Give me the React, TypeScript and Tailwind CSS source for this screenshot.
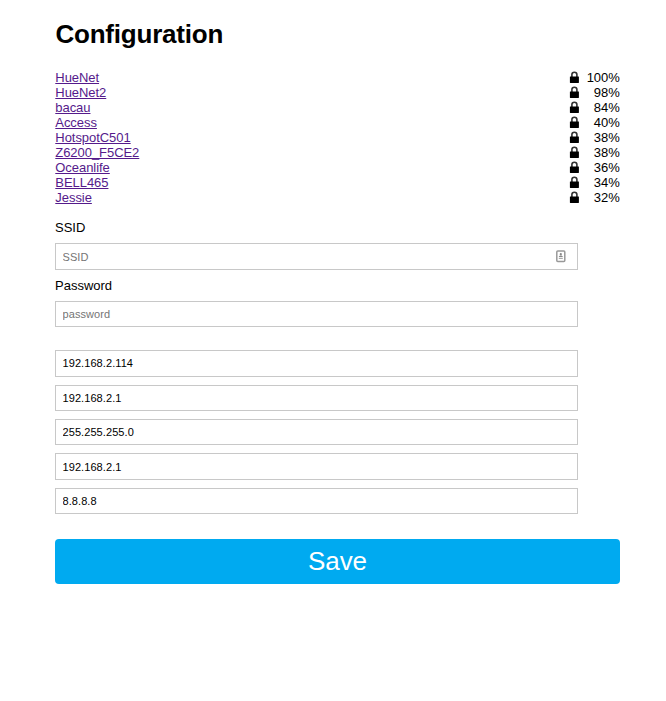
import React from "react";

const networks: [string, number][] = [
  ["HueNet", 100],
  ["HueNet2", 98],
  ["bacau", 84],
  ["Access", 40],
  ["HotspotC501", 38],
  ["Z6200_F5CE2", 38],
  ["Oceanlife", 36],
  ["BELL465", 34],
  ["Jessie", 32],
];

const addresses = [
  { value: "192.168.2.114", size: "h-[27px] mb-2 pb-px" },
  { value: "192.168.2.1", size: "h-[26px] mb-2" },
  { value: "255.255.255.0", size: "h-[26px] mb-2" },
  { value: "192.168.2.1", size: "h-[27px] mb-2" },
  { value: "8.8.8.8", size: "h-[26px]" },
];

const field =
  "block w-full border border-[#c8c8c8] bg-white px-[6.5px] text-[11px] leading-[13px] tracking-[0.08px] text-black outline-none placeholder:text-[#757575]";

function Lock() {
  return (
    <svg width="10" height="13" viewBox="0 0 10 13" className="block">
      <path d="M2.9 6V3.6a2.5 2.3 0 0 1 5 0V6" fill="none" stroke="#333" strokeWidth="1.6" />
      <rect x="0.9" y="5.4" width="9" height="6.5" rx="0.4" fill="#000" />
    </svg>
  );
}

function ContactIcon() {
  return (
    <svg width="11" height="13" viewBox="0 0 11 13" className="absolute right-[12px] top-[7px]">
      <rect x="1.8" y="1" width="8" height="10.6" rx="1" fill="#fff" stroke="#999" strokeWidth="1.5" />
      <circle cx="5.8" cy="4.2" r="1.1" fill="#888" />
      <path d="M3.8 7C3.8 5 7.8 5 7.8 7Z" fill="#888" />
      <path d="M3.8 8.4h4" stroke="#aaa" strokeWidth="1.2" />
    </svg>
  );
}

export default function App() {
  return (
    <main className="min-h-screen bg-white pl-[55px] pr-[46px] pt-[19px] font-['Liberation_Sans',Arial,sans-serif] text-[13px] leading-[15px] text-black">
      <h1 className="mb-[21px] pl-[0.4px] text-[26px] font-bold leading-[30px] tracking-[-0.2px]">Configuration</h1>
      <div className="mb-[15px]">
        {networks.map(([name, quality]) => (
          <div key={name} className="flex h-[15px] items-center">
            <a href="#" className="ml-[0.3px] tracking-[-0.05px] text-[#551a8b] underline">{name}</a>
            <span className="ml-auto"><Lock /></span>
            <span className="w-[41px] pr-[0.3px] text-right tracking-[-0.05px]">{quality}%</span>
          </div>
        ))}
      </div>
      <div className="w-[523px]">
        <label htmlFor="ssid" className="mb-2 block">SSID</label>
        <div className="relative mb-2">
          <input id="ssid" placeholder="SSID" className={`${field} h-[27px]`} />
          <ContactIcon />
        </div>
        <label htmlFor="password" className="mb-2 block">Password</label>
        <input id="password" type="password" placeholder="password" className={`${field} mb-[23px] h-[26px]`} />
        {addresses.map(({ value, size }, i) => (
          <input key={i} defaultValue={value} className={`${field} ${size}`} />
        ))}
      </div>
      <button className="mt-[25px] block h-[45px] w-full rounded-[4px] bg-[#00aaf0] text-[26px] leading-[45px] tracking-[-0.1px] text-white">
        Save
      </button>
    </main>
  );
}
